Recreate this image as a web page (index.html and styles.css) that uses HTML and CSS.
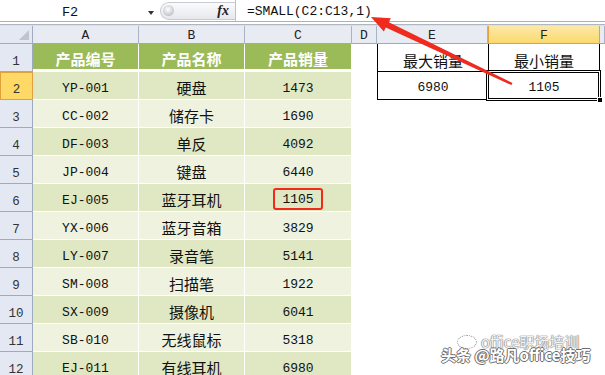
FILE: index.html
```html
<!DOCTYPE html>
<html lang="zh-CN">
<head>
<meta charset="utf-8">
<title>SMALL</title>
<link rel="stylesheet" href="styles.css">
</head>
<body>
<div class="app">
  <div class="fbar">
    <div class="namebox"><span class="nb-text">F2</span><span class="nb-arrow"></span></div>
    <div class="fx-area"><span class="pill"></span><span class="knob"></span><span class="fx">fx</span></div>
    <div class="formula">=SMALL(C2:C13,1)</div>
  </div>
  <div class="strip"></div>
  <div class="sheet">
    <div class="corner"></div>
    <div class="ch">A</div><div class="ch">B</div><div class="ch">C</div><div class="ch">D</div><div class="ch">E</div><div class="ch sel">F</div><div class="ch"></div>

    <div class="rh">1</div>
    <div class="th">产品编号</div><div class="th">产品名称</div><div class="th">产品销量</div>
    <div class="bl"></div><div class="bx e cjk">最大销量</div><div class="bx f cjk">最小销量</div><div class="bl"></div>

    <div class="rh sel">2</div>
    <div class="td b1">YP-001</div><div class="td b1 cjk">硬盘</div><div class="td b1">1473</div>
    <div class="bl"></div><div class="bx e">6980</div><div class="bx f active">1105</div><div class="bl"></div>

    <div class="rh">3</div>
    <div class="td b2">CC-002</div><div class="td b2 cjk">储存卡</div><div class="td b2">1690</div>
    <div class="bl"></div><div class="bl"></div><div class="bl"></div><div class="bl"></div>

    <div class="rh">4</div>
    <div class="td b1">DF-003</div><div class="td b1 cjk">单反</div><div class="td b1">4092</div>
    <div class="bl"></div><div class="bl"></div><div class="bl"></div><div class="bl"></div>

    <div class="rh">5</div>
    <div class="td b2">JP-004</div><div class="td b2 cjk">键盘</div><div class="td b2">6440</div>
    <div class="bl"></div><div class="bl"></div><div class="bl"></div><div class="bl"></div>

    <div class="rh">6</div>
    <div class="td b1">EJ-005</div><div class="td b1 cjk">蓝牙耳机</div><div class="td b1 hlcell"><span class="hl">1105</span></div>
    <div class="bl"></div><div class="bl"></div><div class="bl"></div><div class="bl"></div>

    <div class="rh">7</div>
    <div class="td b2">YX-006</div><div class="td b2 cjk">蓝牙音箱</div><div class="td b2">3829</div>
    <div class="bl"></div><div class="bl"></div><div class="bl"></div><div class="bl"></div>

    <div class="rh">8</div>
    <div class="td b1">LY-007</div><div class="td b1 cjk">录音笔</div><div class="td b1">5141</div>
    <div class="bl"></div><div class="bl"></div><div class="bl"></div><div class="bl"></div>

    <div class="rh">9</div>
    <div class="td b2">SM-008</div><div class="td b2 cjk">扫描笔</div><div class="td b2">1922</div>
    <div class="bl"></div><div class="bl"></div><div class="bl"></div><div class="bl"></div>

    <div class="rh">10</div>
    <div class="td b1">SX-009</div><div class="td b1 cjk">摄像机</div><div class="td b1">6041</div>
    <div class="bl"></div><div class="bl"></div><div class="bl"></div><div class="bl"></div>

    <div class="rh">11</div>
    <div class="td b2">SB-010</div><div class="td b2 cjk">无线鼠标</div><div class="td b2">5318</div>
    <div class="bl"></div><div class="bl"></div><div class="bl"></div><div class="bl"></div>

    <div class="rh">12</div>
    <div class="td b1">EJ-011</div><div class="td b1 cjk">有线耳机</div><div class="td b1">6980</div>
    <div class="bl"></div><div class="bl"></div><div class="bl"></div><div class="bl"></div>
  </div>

  <svg class="arrow" width="605" height="375" viewBox="0 0 605 375" aria-hidden="true">
    <polygon points="371,17 390.8,18.2 388.9,22.2 512.5,82.9 511.5,85.1 385.8,27.6 383.8,31.4" fill="#EE2B1E"/>
  </svg>

  <div class="wm">
    <div class="wm-sub"><span class="wm-icon"></span>office职场培训</div>
    <div class="wm-main">头条 @路凡office技巧</div>
  </div>
</div>
</body>
</html>
```

FILE: styles.css
```css
html, body {
  margin: 0;
  padding: 0;
  background: #fff;
}
body {
  width: 605px;
  height: 375px;
  overflow: hidden;
  font-family: "Liberation Mono", "Noto Sans CJK SC", monospace;
  font-size: 13px;
  color: #111;
}
.app {
  position: relative;
  width: 605px;
  height: 375px;
  overflow: hidden;
}

/* formula bar */
.fbar {
  display: flex;
  height: 22px;
  box-sizing: border-box;
  border-bottom: 1px solid #A9B1BE;
  background: #fff;
}
.namebox {
  width: 158px;
  position: relative;
  display: flex;
  align-items: center;
}
.nb-text {
  width: 140px;
  text-align: center;
  line-height: 13px;
  padding-top: 3px;
  font-size: 13.5px;
}
.nb-arrow {
  position: absolute;
  left: 148px;
  top: 11px;
  width: 0;
  height: 0;
  border-left: 3.5px solid transparent;
  border-right: 3.5px solid transparent;
  border-top: 4px solid #333;
}
.fx-area {
  width: 78px;
  position: relative;
  box-sizing: border-box;
  border-right: 1px solid #BCC2CC;
}
.pill {
  position: absolute;
  left: 2px;
  top: 2px;
  bottom: 1px;
  right: 0;
  border: 1px solid #C6CAD2;
  border-right: none;
  border-radius: 9px 0 0 9px;
  background: linear-gradient(#FBFBFC, #E7E8EC);
}
.knob {
  position: absolute;
  left: 5px;
  top: 5px;
  width: 11px;
  height: 11px;
  border-radius: 50%;
  background: radial-gradient(circle at 45% 40%, #FFFFFF 0, #D9DBE0 45%, #A9ADB6 100%);
}
.fx {
  position: absolute;
  right: 6px;
  top: 2px;
  font-family: "Liberation Serif", serif;
  font-style: italic;
  font-weight: bold;
  font-size: 14px;
  line-height: 17px;
  color: #222;
}
.formula {
  flex: 1;
  padding-left: 11px;
  padding-top: 2px;
  display: flex;
  align-items: center;
  white-space: pre;
  font-size: 13px;
}
.strip {
  height: 4px;
  background: linear-gradient(to bottom, #fff 0, #fff 2px, #AEB6C2 2px, #AEB6C2 3px, #DCE0E8 3px, #DCE0E8 4px);
}

/* sheet grid */
.sheet {
  display: grid;
  grid-template-columns: 33px 106px 106px 107px 25px 111px 112px 5px;
  grid-template-rows: 18px repeat(12, 28px);
}
.sheet > div {
  box-sizing: border-box;
  min-width: 0;
}
.corner {
  position: relative;
  background: #E4E8F2;
  border-right: 1px solid #A0ABBE;
  border-bottom: 1px solid #A0ABBE;
}
.corner::after {
  content: "";
  position: absolute;
  right: 3px;
  bottom: 3px;
  width: 0;
  height: 0;
  border-left: 10px solid transparent;
  border-bottom: 10px solid #BEC3CD;
}
.ch {
  background: #E8EBF2;
  border-right: 1px solid #A9B3C5;
  border-bottom: 1px solid #9DA9BC;
  display: flex;
  justify-content: center;
  align-items: flex-end;
  line-height: 14px;
  color: #222;
}
.ch.sel {
  background: linear-gradient(#FCE9A8, #FBD96E);
  border: 1px solid #E3A23C;
  border-top: none;
}
.rh {
  background: #E3E8F3;
  border-right: 1px solid #9EAAC0;
  border-bottom: 1px solid #9EAAC0;
  display: flex;
  justify-content: center;
  align-items: flex-end;
  padding-bottom: 2px;
  line-height: 13px;
  font-size: 12.5px;
  color: #333;
}
.rh.sel {
  background: #FFD966;
  border: 1px solid #E1A03A;
}

.th {
  background: #9BBB59;
  color: #fff;
  font-family: "Noto Sans CJK SC", sans-serif;
  font-weight: bold;
  font-size: 15px;
  line-height: 15px;
  border-right: 1px solid #fff;
  border-bottom: 3px solid #fff;
  display: flex;
  justify-content: center;
  align-items: flex-end;
  padding-bottom: 3px;
}
.td {
  border-right: 1px solid #fff;
  border-bottom: 1px solid #fff;
  display: flex;
  justify-content: center;
  align-items: flex-end;
  padding-bottom: 3px;
  line-height: 15px;
}
.b1 { background: #DFE7C3; }
.b2 { background: #EEF2DF; }
.cjk {
  font-family: "Noto Sans CJK SC", sans-serif;
  font-size: 15px;
  padding-bottom: 4px;
}
.bl { background: #fff; }

.bx {
  background: #fff;
  border-left: 1px solid #000;
  border-bottom: 1px solid #000;
  display: flex;
  justify-content: center;
  align-items: flex-end;
  padding-bottom: 4px;
  line-height: 15px;
}
.bx.f { border-right: 1px solid #000; }
.bx.cjk { padding-bottom: 3px; }
.active { position: relative; }
.active::after {
  content: "";
  position: absolute;
  left: -3px;
  top: -2px;
  right: -2px;
  bottom: -2px;
  border: 1px solid #000;
  box-shadow: inset 0 0 0 1px #fff, inset 0 0 0 2px #000;
}
.active::before {
  content: "";
  position: absolute;
  right: -4px;
  bottom: -4px;
  width: 4px;
  height: 4px;
  background: #000;
  border: 1px solid #fff;
  z-index: 2;
}

.hlcell { padding-bottom: 1px; }
.hl {
  border: 2px solid #F22A1D;
  border-radius: 3px;
  padding: 2px 7px 1px;
  line-height: 15px;
}

/* overlays */
.arrow {
  position: absolute;
  left: 0;
  top: 0;
  pointer-events: none;
}
.wm {
  position: absolute;
  left: 440px;
  top: 333px;
  width: 165px;
  height: 42px;
  pointer-events: none;
  font-family: "Noto Sans CJK SC", sans-serif;
}
.wm-sub {
  position: absolute;
  left: 17px;
  top: 0;
  display: flex;
  align-items: center;
  gap: 4px;
  font-size: 15px;
  line-height: 17px;
  color: rgba(255, 255, 255, 0.92);
  text-shadow: 0 0 1px #7E7E7E, 0 0 1px #7E7E7E, 0 0 1px #7E7E7E;
}
.wm-icon {
  width: 18px;
  height: 12px;
  border-radius: 50%;
  border: 1px dotted #8E8E8E;
}
.wm-main {
  position: absolute;
  left: 1px;
  top: 13px;
  font-size: 15px;
  line-height: 18px;
  font-weight: bold;
  white-space: nowrap;
  color: #fff;
  text-shadow: 1px 0 0 #6E6E6E, -1px 0 0 #6E6E6E, 0 1px 0 #6E6E6E, 0 -1px 0 #6E6E6E;
}
```
